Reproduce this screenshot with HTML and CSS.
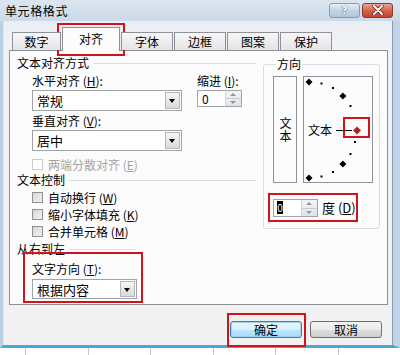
FILE: index.html
```html
<!DOCTYPE html>
<html lang="zh-CN">
  <head>
    <meta charset="UTF-8" />
    <title>单元格格式</title>
    <link rel="stylesheet" href="styles.css">
  </head>
  <body>
    <div class="window">
      <div class="titlebar">
        <span class="title">单元格格式</span>
        <div class="caption">
          <span class="cap-btn help">?</span>
          <span class="cap-btn close">
            <svg width="14" height="10" viewBox="0 0 14 10">
              <path d="M3 1 L11 9 M11 1 L3 9" stroke="#5a1a10" stroke-width="3.4" stroke-linecap="round" />
              <path d="M3 1 L11 9 M11 1 L3 9" stroke="#ffffff" stroke-width="2" stroke-linecap="round" />
            </svg>
          </span>
        </div>
      </div>

      <div class="client">
        <div class="tabs">
          <div class="tab first">数字</div>
          <div class="tab on">对齐</div>
          <div class="tab">字体</div>
          <div class="tab">边框</div>
          <div class="tab">图案</div>
          <div class="tab">保护</div>
        </div>

        <div class="panel">
          <div class="main">
            <div class="group-head">文本对齐方式</div>
            <div class="align-row">
              <div class="align-col">
                <div class="label">水平对齐 (<u>H</u>):</div>
                <div class="combo"><span>常规</span><i class="drop"></i></div>
                <div class="label">垂直对齐 (<u>V</u>):</div>
                <div class="combo"><span>居中</span><i class="drop"></i></div>
                <div class="check disabled"><i class="box"></i>两端分散对齐 (<u>E</u>)</div>
              </div>
              <div class="indent-col">
                <div class="label">缩进 (<u>I</u>):</div>
                <div class="spin">
                  <span class="spin-val">0</span>
                  <span class="spin-btns"><i class="up"></i><i class="down"></i></span>
                </div>
              </div>
            </div>

            <div class="group-head">文本控制</div>
            <div class="check"><i class="box"></i>自动换行 (<u>W</u>)</div>
            <div class="check"><i class="box"></i>缩小字体填充 (<u>K</u>)</div>
            <div class="check"><i class="box"></i>合并单元格 (<u>M</u>)</div>

            <div class="group-head short">从右到左</div>
            <div class="dir-block">
              <div class="label">文字方向 (<u>T</u>):</div>
              <div class="combo narrow"><span>根据内容</span><i class="drop"></i></div>
            </div>
          </div>

          <fieldset class="orient">
            <legend>方向</legend>
            <div class="orient-boxes">
              <div class="vbox"><span class="vtext">文本</span></div>
              <div class="dial">
                <svg width="68" height="105" viewBox="0 0 68 105">
                  <g fill="#000">
                    <path d="M5 1.5 L8.5 5 L5 8.5 L1.5 5 Z" />
                    <rect x="16.5" y="5.5" width="2" height="2" />
                    <rect x="28" y="10" width="2" height="2" />
                    <path d="M38.9 15.6 L42.4 19.1 L38.9 22.6 L35.4 19.1 Z" />
                    <rect x="45.5" y="28" width="2" height="2" />
                    <rect x="50" y="40" width="2" height="2" />
                    <rect x="50" y="64" width="2" height="2" />
                    <rect x="45.5" y="76" width="2" height="2" />
                    <path d="M38.9 83.4 L42.4 86.9 L38.9 90.4 L35.4 86.9 Z" />
                    <rect x="28" y="94" width="2" height="2" />
                    <rect x="16.5" y="98.5" width="2" height="2" />
                    <path d="M5 97.5 L8.5 101 L5 104.5 L1.5 101 Z" />
                  </g>
                  <text x="4" y="57.5" font-size="12" font-family="Noto Sans CJK SC, sans-serif">文本</text>
                  <path d="M32 53.5 H48" stroke="#000" stroke-width="1" />
                  <path d="M53 49.5 L57 53.5 L53 57.5 L49 53.5 Z" fill="#b3202a" />
                </svg>
              </div>
            </div>
            <div class="degree-row">
              <div class="spin deg">
                <span class="spin-val"><b class="sel">0</b></span>
                <span class="spin-btns"><i class="up"></i><i class="down"></i></span>
              </div>
              <span class="deg-label">度 (<u>D</u>)</span>
            </div>
          </fieldset>
        </div>

        <div class="actions">
          <button class="btn default">确定</button>
          <button class="btn">取消</button>
        </div>
      </div>
    </div>

    <div class="sheet">
      <span></span><span></span><span></span><span></span><span></span><span></span>
    </div>

    <!-- red annotation frames -->
    <div class="mark mark-tab"></div>
    <div class="mark mark-dial"></div>
    <div class="mark mark-deg"></div>
    <div class="mark mark-dir"></div>
    <div class="mark mark-ok"></div>
  </body>
</html>
```

FILE: styles.css
```css
* {
  box-sizing: border-box;
}

html,
body {
  margin: 0;
  padding: 0;
}

body {
  position: relative;
  width: 400px;
  height: 355px;
  overflow: hidden;
  background: #ffffff;
  font-family: "Noto Sans CJK SC", "Noto Sans", sans-serif;
  font-size: 12px;
  color: #000;
}

u {
  text-decoration: underline;
  text-underline-offset: 1px;
}

.window {
  display: flex;
  flex-direction: column;
  height: 348px;
}

/* title bar */
.titlebar {
  height: 21px;
  display: flex;
  align-items: center;
  justify-content: space-between;
  padding: 0 7px 0 5px;
  background: linear-gradient(#dce6f1, #cbd9e8);
}

.title {
  font-size: 12px;
  letter-spacing: 0.6px;
  line-height: 21px;
}

.caption {
  display: flex;
  gap: 2px;
  margin-top: -1px;
}

.cap-btn {
  display: flex;
  align-items: center;
  justify-content: center;
  height: 15px;
  border-radius: 3px;
}

.help {
  width: 31px;
  border: 1px solid #8a9bb1;
  background: linear-gradient(#e6eef7, #c4d4e6 50%, #b2c6dc);
  color: #ffffff;
  font-family: "DejaVu Sans", sans-serif;
  font-weight: bold;
  font-size: 11px;
  text-shadow: 0 0 1px #44536a, 0 0 1px #44536a;
}

.close {
  width: 31px;
  border: 1px solid #8c3a2e;
  background: linear-gradient(#e9a593, #d4654e 50%, #c5432c);
}

/* client area */
.client {
  flex: 1;
  display: flex;
  flex-direction: column;
  padding: 11px 5px 0 6px;
  background: linear-gradient(#e9eef4, #f1f2f4 30px, #f1f1f1);
  border-left: 3px solid #bccfe3;
  border-right: 7px solid #bfd2e7;
  border-bottom: 3px solid #45a9d8;
  box-shadow: inset -1px 0 0 #8c9cb0, inset 1px 0 0 #dde7f1;
}

.tabs {
  display: flex;
  align-items: flex-end;
  height: 19px;
  padding-left: 3px;
  margin-bottom: -1px;
  position: relative;
  z-index: 1;
}

.tab {
  width: 52px;
  height: 18px;
  margin-bottom: 1px;
  margin-left: 1px;
  border: 1px solid #8e9198;
  border-bottom: none;
  background: linear-gradient(#f7f7f7, #e4e4e4);
  text-align: center;
  line-height: 17px;
}

.tab.first {
  width: 49px;
  margin-left: 0;
}

.tab.on {
  width: 58px;
  height: 24px;
  margin: 0 0 0 1px;
  background: #fcfcfc;
  line-height: 21px;
}

.panel {
  display: flex;
  height: 255px;
  padding: 4px 0 0 6px;
  border: 1px solid #8e9198;
  background: #fcfcfc;
}

.main {
  width: 240px;
}

.group-head {
  display: flex;
  align-items: center;
  height: 16px;
  line-height: 16px;
  padding-left: 1px;
}

.group-head::after {
  content: "";
  flex: 1;
  height: 1px;
  margin: 1px 0 0 4px;
  background: #d5dfe5;
}

.group-head.short {
  width: 120px;
  margin-top: 2px;
}

.align-row {
  display: flex;
}

.align-col {
  width: 166px;
  padding-left: 16px;
}

.indent-col {
  padding-left: 15px;
}

.label {
  height: 16px;
  line-height: 16px;
  margin-top: 2px;
}

.combo {
  display: flex;
  align-items: center;
  justify-content: space-between;
  width: 150px;
  height: 21px;
  margin-top: 1px;
  padding: 1px 1px 1px 4px;
  border: 1px solid #a0a3a8;
  background: #ffffff;
  font-size: 13px;
}

.combo.narrow {
  width: 105px;
  height: 20px;
  margin-top: 2px;
}

.drop {
  position: relative;
  width: 15px;
  height: 100%;
  border: 1px solid #b3b5b9;
  background: linear-gradient(#f6f6f6, #d9dadc);
}

.drop::after {
  content: "";
  position: absolute;
  left: 3px;
  top: 6px;
  border-left: 3.5px solid transparent;
  border-right: 3.5px solid transparent;
  border-top: 4px solid #000;
}

.check {
  display: flex;
  align-items: center;
  height: 15px;
  margin-top: 2px;
}

.align-col .check {
  margin-top: 6px;
}

.box {
  width: 11px;
  height: 11px;
  margin-right: 5px;
  border: 1px solid #8f9193;
  background: linear-gradient(135deg, #d6d7d9, #f2f2f2);
}

.check.disabled {
  color: #a3a3a3;
}

.check.disabled .box {
  border-color: #cccccc;
  background: #ffffff;
}

.main > .check {
  margin-left: 16px;
}

.dir-block {
  padding: 2px 0 0 16px;
}

/* spinners */
.spin {
  display: flex;
  width: 45px;
  height: 17px;
  margin-top: 1px;
  border: 1px solid #a0a3a8;
  background: #ffffff;
}

.spin-val {
  flex: 1;
  padding-left: 4px;
  line-height: 15px;
}

.spin-btns {
  display: flex;
  flex-direction: column;
  width: 16px;
  border-left: 1px solid #d4d7dc;
  background: linear-gradient(#f3f4f6, #e0e3e8);
}

.spin-btns i {
  flex: 1;
  position: relative;
}

.spin-btns .up {
  border-bottom: 1px solid #c8ccd2;
}

.spin-btns .up::after,
.spin-btns .down::after {
  content: "";
  position: absolute;
  left: 4px;
  border-left: 3.5px solid transparent;
  border-right: 3.5px solid transparent;
}

.spin-btns .up::after {
  top: 2px;
  border-bottom: 3px solid #8e97a4;
}

.spin-btns .down::after {
  top: 2px;
  border-top: 3px solid #8e97a4;
}

/* orientation */
.orient {
  width: 117px;
  height: 173px;
  margin: 1px 0 0 7px;
  padding: 4px 0 0 9px;
  border: 1px solid #d5dfe5;
  border-radius: 3px;
  min-width: 0;
}

.orient legend {
  padding: 0 1px;
  margin-left: 3px;
  line-height: 16px;
}

.orient-boxes {
  display: flex;
  gap: 6px;
}

.vbox {
  display: flex;
  align-items: center;
  justify-content: center;
  width: 24px;
  height: 107px;
  border: 1px solid #8f9297;
}

.vtext {
  writing-mode: vertical-rl;
  text-orientation: upright;
  letter-spacing: 1px;
  line-height: 14px;
}

.dial {
  width: 70px;
  height: 107px;
  border: 1px solid #8f9297;
}

.dial svg {
  display: block;
}

.degree-row {
  display: flex;
  align-items: center;
  margin-top: 15px;
}

.spin.deg {
  height: 18px;
}

.spin.deg .spin-val {
  padding-left: 3px;
  line-height: 16px;
}

.sel {
  display: inline-block;
  width: 6px;
  height: 13px;
  margin-top: 1px;
  background: #000;
  color: #fff;
  font-weight: normal;
  font-size: 10px;
  line-height: 13px;
  text-align: center;
  vertical-align: top;
}

.deg-label {
  margin-left: 4px;
  font-size: 13px;
}

/* buttons */
.actions {
  display: flex;
  justify-content: flex-end;
  gap: 8px;
  margin-top: 16px;
  padding-right: 6px;
}

.btn {
  width: 72px;
  height: 17px;
  padding: 0;
  border: 1px solid #707070;
  border-radius: 3px;
  background: linear-gradient(#f4f4f4, #ebebeb 50%, #dcdcdc 51%, #cfcfcf);
  font-family: inherit;
  font-size: 12px;
  line-height: 14px;
  color: #000;
}

.btn.default {
  border-color: #3c7fb1;
  box-shadow: inset 0 0 0 1px #9fd3ee;
  background: linear-gradient(#eaf6fd, #d9f0fc 50%, #bee6fd 51%, #a7d9f5);
}

/* worksheet peeking below the dialog */
.sheet {
  display: flex;
  height: 7px;
  padding-left: 25px;
}

.sheet span {
  width: 72px;
  border-left: 1px solid #c6c6c6;
}

/* red annotation frames */
.mark {
  position: absolute;
  border: 2px solid #d3131c;
}

.mark-tab {
  left: 57px;
  top: 23px;
  width: 68px;
  height: 33px;
}

.mark-dial {
  left: 343px;
  top: 117px;
  width: 27px;
  height: 21px;
}

.mark-deg {
  left: 268px;
  top: 193px;
  width: 90px;
  height: 29px;
}

.mark-dir {
  left: 23px;
  top: 252px;
  width: 120px;
  height: 51px;
}

.mark-ok {
  left: 227px;
  top: 313px;
  width: 79px;
  height: 34px;
}
```
